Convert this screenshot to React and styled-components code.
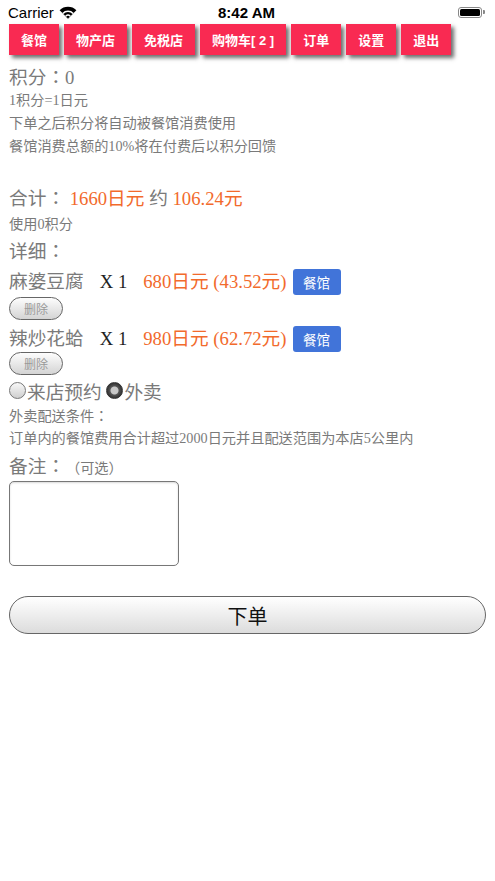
import React from "react";
import styled, { createGlobalStyle } from "styled-components";

const Global = createGlobalStyle`
  html, body { margin: 0; padding: 0; background: #fff; }
  body { font-family: "Liberation Serif", "Noto Sans CJK SC", serif; }
  * { box-sizing: border-box; }
`;

const Page = styled.div`
  width: 495px;
  min-height: 881px;
  background: #fff;
`;

const StatusBar = styled.div`
  height: 24px;
  display: grid;
  grid-template-columns: 1fr auto 1fr;
  align-items: center;
  padding: 0 10px 0 8px;
  font-family: "Liberation Sans", Arial, sans-serif;
  color: #000;
`;

const Carrier = styled.div`
  display: flex;
  align-items: center;
  gap: 5px;
  font-size: 15px;
`;

const Time = styled.div`
  font-size: 15px;
  font-weight: 700;
`;

const BatteryWrap = styled.div`
  justify-self: end;
  display: flex;
  align-items: center;
`;

const BatteryBody = styled.div`
  width: 24px;
  height: 11px;
  border: 1px solid #888;
  border-radius: 3px;
  padding: 1px;
  display: flex;
`;

const BatteryFill = styled.div`
  flex: 1;
  background: #000;
  border-radius: 1.5px;
`;

const BatteryNub = styled.div`
  width: 2px;
  height: 4px;
  margin-left: 1px;
  background: #888;
  border-radius: 0 1px 1px 0;
`;

const Nav = styled.div`
  display: flex;
  gap: 5px;
  padding-left: 9px;
  height: 31px;
`;

const NavButton = styled.div`
  height: 31px;
  padding: 0 12px;
  display: flex;
  align-items: center;
  justify-content: center;
  background: #f92a52;
  color: #fff;
  font-family: "Liberation Sans", "Noto Sans CJK SC", sans-serif;
  font-weight: 700;
  font-size: 13px;
  white-space: pre;
  box-shadow: 3px 3px 4px rgba(60, 60, 60, 0.75);
`;

const Content = styled.div`
  padding: 0 9px;
  margin-top: 8px;
  color: #7a7a7a;
`;

const Big = styled.div`
  font-size: 18.7px;
  line-height: 26px;
  height: 26px;
  margin-top: ${(p) => p.$mt || 0}px;
  white-space: nowrap;
`;

const Small = styled.div`
  font-size: 14.2px;
  line-height: 23px;
  height: 23px;
  margin-top: ${(p) => p.$mt || 0}px;
  white-space: nowrap;
`;

const Colon = styled.span`
  font-family: "Noto Sans CJK TC", sans-serif;
`;

const Orange = styled.span`
  color: #f26a2c;
`;

const Note = styled.span`
  font-size: 14.2px;
  margin-left: 8px;
  font-family: "Noto Sans CJK TC", sans-serif;
`;

const ItemRow = styled.div`
  display: flex;
  align-items: baseline;
  height: 26px;
  line-height: 26px;
  margin-top: ${(p) => p.$mt || 0}px;
  font-size: 18.7px;
  white-space: nowrap;
`;

const ItemName = styled.span`
  color: #7a7a7a;
`;

const Qty = styled.span`
  color: #1e1e1e;
  margin-left: 16px;
`;

const Price = styled.span`
  color: #f26a2c;
  margin-left: 16px;
`;

const Tag = styled.div`
  align-self: center;
  margin-left: 6px;
  width: 48px;
  height: 26px;
  border-radius: 3px;
  background: #4174d9;
  color: #fff;
  font-family: "Noto Sans CJK SC", sans-serif;
  font-size: 13.5px;
  line-height: 26px;
  text-align: center;
`;

const DeleteButton = styled.div`
  width: 54px;
  height: 23px;
  margin-top: ${(p) => p.$mt || 0}px;
  border: 1px solid #666;
  border-radius: 12px;
  background: linear-gradient(#fdfdfd, #d4d4d4);
  color: #999;
  font-family: "Noto Sans CJK SC", sans-serif;
  font-size: 12px;
  display: flex;
  align-items: center;
  justify-content: center;
`;

const RadioRow = styled.div`
  display: flex;
  align-items: center;
  height: 26px;
  margin-top: 2px;
  font-size: 18.7px;
  color: #7a7a7a;
  white-space: pre;
`;

const Radio = styled.span`
  width: 17px;
  height: 17px;
  border-radius: 50%;
  display: inline-block;
  margin-right: 1px;
  ${(p) =>
    p.$checked
      ? `background: radial-gradient(circle, #c8c8c8 0 3.5px, #555 4.5px, #2e2e2e 8px);
         border: 1px solid #333;`
      : `background: linear-gradient(#f8f8f8, #cfcfcf);
         border: 1px solid #777;`}
`;

const NoteArea = styled.textarea`
  display: block;
  width: 170px;
  height: 85px;
  margin-top: 3px;
  border: 1px solid #777;
  border-radius: 5px;
  background: #fff;
  resize: none;
  box-shadow: inset 0 1px 2px rgba(0, 0, 0, 0.15);
  outline: none;
`;

const SubmitButton = styled.button`
  display: flex;
  align-items: center;
  justify-content: center;
  width: 477px;
  height: 38px;
  margin-top: 30px;
  padding: 0;
  border: 1px solid #666;
  border-radius: 19px;
  background: linear-gradient(#ffffff, #dcdcdc);
  color: #111;
  font-family: "Noto Sans CJK SC", sans-serif;
  font-size: 20px;
`;

const Wifi = () => (
  <svg width="18" height="13" viewBox="0 0 18 13">
    <path d="M9 12.5 L0.6 4.2 A12 12 0 0 1 17.4 4.2 Z" fill="#000" />
    <path d="M9 12.5 L3.3 6.9 A8 8 0 0 1 14.7 6.9 Z" fill="#fff" />
    <path d="M9 12.5 L4.4 8 A6.5 6.5 0 0 1 13.6 8 Z" fill="#000" />
    <path d="M9 12.5 L6.2 9.7 A4 4 0 0 1 11.8 9.7 Z" fill="#fff" />
    <path d="M9 12.5 L7.2 10.7 A2.6 2.6 0 0 1 10.8 10.7 Z" fill="#000" />
  </svg>
);

const navItems = ["餐馆", "物产店", "免税店", "购物车[ 2 ]", "订单", "设置", "退出"];

const items = [
  { name: "麻婆豆腐", qty: "X 1", price: "680日元 (43.52元)" },
  { name: "辣炒花蛤", qty: "X 1", price: "980日元 (62.72元)" },
];

export default function App() {
  return (
    <Page>
      <Global />
      <StatusBar>
        <Carrier>
          Carrier
          <Wifi />
        </Carrier>
        <Time>8:42 AM</Time>
        <BatteryWrap>
          <BatteryBody>
            <BatteryFill />
          </BatteryBody>
          <BatteryNub />
        </BatteryWrap>
      </StatusBar>
      <Nav>
        {navItems.map((n) => (
          <NavButton key={n}>{n}</NavButton>
        ))}
      </Nav>
      <Content>
        <Big>
          积分<Colon>：</Colon>0
        </Big>
        <Small>1积分=1日元</Small>
        <Small>下单之后积分将自动被餐馆消费使用</Small>
        <Small>餐馆消费总额的10%将在付费后以积分回馈</Small>
        <Big $mt={26}>
          合计<Colon>：</Colon> <Orange>1660日元</Orange> 约 <Orange>106.24元</Orange>
        </Big>
        <Small $mt={3}>使用0积分</Small>
        <Big $mt={1}>
          详细<Colon>：</Colon>
        </Big>
        {items.map((it, i) => (
          <React.Fragment key={it.name}>
            <ItemRow $mt={6}>
              <ItemName>{it.name}</ItemName>
              <Qty>{it.qty}</Qty>
              <Price>{it.price}</Price>
              <Tag>餐馆</Tag>
            </ItemRow>
            <DeleteButton $mt={i === 0 ? 2 : 0}>删除</DeleteButton>
          </React.Fragment>
        ))}
        <RadioRow>
          <Radio />
          来店预约 <Radio $checked />
          外卖
        </RadioRow>
        <Small $mt={1}>
          外卖配送条件<Colon>：</Colon>
        </Small>
        <Small>订单内的餐馆费用合计超过2000日元并且配送范围为本店5公里内</Small>
        <Big $mt={2}>
          备注<Colon>：</Colon>
          <Note>（可选）</Note>
        </Big>
        <NoteArea />
        <SubmitButton>下单</SubmitButton>
      </Content>
    </Page>
  );
}
